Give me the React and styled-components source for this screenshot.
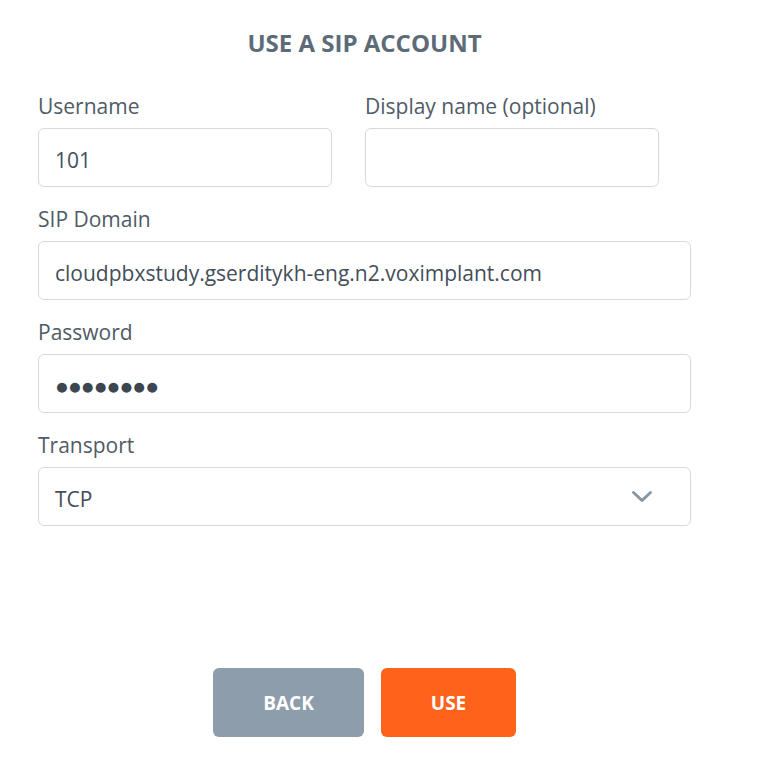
import React from "react";
import styled, { createGlobalStyle } from "styled-components";

const Global = createGlobalStyle`
  html, body { margin: 0; padding: 0; background: #ffffff; }
  body { font-family: "Open Sans", "Noto Sans", sans-serif; }
`;

const Page = styled.div`
  width: 758px;
  height: 776px;
  box-sizing: border-box;
  padding: 27px 67px 0 38px;
  display: flex;
  flex-direction: column;
`;

const Title = styled.h1`
  margin: 0 0 33px;
  text-align: center;
  font-size: 24px;
  font-weight: 700;
  color: #5d6b78;
  line-height: 32px;
`;

const Row = styled.div`
  display: grid;
  grid-template-columns: ${(p) => p.$cols || "1fr"};
  column-gap: 33px;
  margin-bottom: 18px;
`;

const Field = styled.div`
  display: flex;
  flex-direction: column;
  gap: 8px;
`;

const Label = styled.label`
  font-size: 21px;
  line-height: 28px;
  color: #4f5b66;
`;

const Box = styled.div`
  position: relative;
  height: 59px;
  box-sizing: border-box;
  border: 1.5px solid #d6dadd;
  border-radius: 6px;
  background: #fff;
  display: flex;
  align-items: center;
  padding: 5px 16px 0;
  font-size: 21px;
  color: #434e59;
`;

const Dots = styled.span`
  font-size: 23px;
  letter-spacing: -1px;
  color: #3c4650;
  margin-top: -2px;
`;

const Chevron = styled.svg`
  margin-left: auto;
  margin-right: 21px;
  margin-top: -5px;
`;

const Actions = styled.div`
  margin-top: auto;
  margin-bottom: 39px;
  display: flex;
  justify-content: center;
  gap: 17px;
`;

const Button = styled.button`
  height: 69px;
  width: ${(p) => p.$w}px;
  border: none;
  border-radius: 6px;
  background: ${(p) => p.$bg};
  color: #ffffff;
  font-family: inherit;
  font-size: 19px;
  font-weight: 700;
  cursor: pointer;
`;

export default function App() {
  return (
    <>
      <Global />
      <Page>
        <Title>USE A SIP ACCOUNT</Title>
        <Row $cols="294px 294px">
          <Field>
            <Label>Username</Label>
            <Box>101</Box>
          </Field>
          <Field>
            <Label>Display name (optional)</Label>
            <Box />
          </Field>
        </Row>
        <Row>
          <Field>
            <Label>SIP Domain</Label>
            <Box>cloudpbxstudy.gserditykh-eng.n2.voximplant.com</Box>
          </Field>
        </Row>
        <Row>
          <Field>
            <Label>Password</Label>
            <Box>
              <Dots>●●●●●●●●</Dots>
            </Box>
          </Field>
        </Row>
        <Row>
          <Field>
            <Label>Transport</Label>
            <Box>
              TCP
              <Chevron width="22" height="13" viewBox="0 0 22 13">
                <path d="M2.5 2.5 L11 10.5 L19.5 2.5" fill="none" stroke="#8796a3" strokeWidth="3" strokeLinecap="round" strokeLinejoin="round" />
              </Chevron>
            </Box>
          </Field>
        </Row>
        <Actions>
          <Button $bg="#8e9dab" $w={151}>BACK</Button>
          <Button $bg="#ff621a" $w={135}>USE</Button>
        </Actions>
      </Page>
    </>
  );
}
